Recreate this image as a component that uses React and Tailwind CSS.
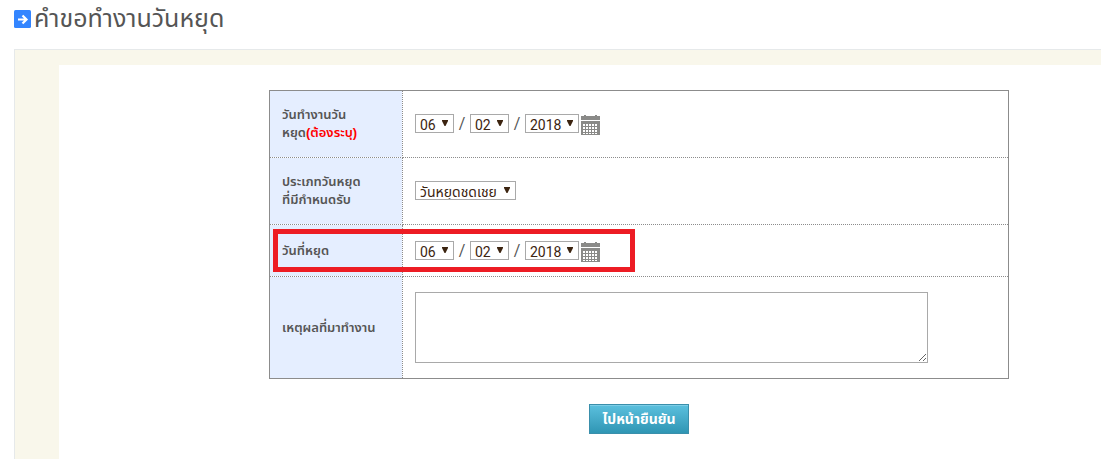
import { useState } from 'react';

const months = ['01', '02', '03', '04', '05', '06', '07', '08', '09', '10', '11', '12'];
const days = Array.from({ length: 31 }, (_, i) => String(i + 1).padStart(2, '0'));
const years = ['2017', '2018', '2019'];

function Select({ label, value, onChange, options, className }) {
  return (
    <span className="relative inline-flex">
      <select
        aria-label={label}
        value={value}
        onChange={(e) => onChange(e.target.value)}
        className={`h-[19px] appearance-none border border-[#a9a9a9] bg-white pl-1 text-[#3c2410] ${className}`}
      >
        {options.map((option) => (
          <option key={option} value={option}>{option}</option>
        ))}
      </select>
      <svg
        className="pointer-events-none absolute top-[6px] right-[6px] h-[6px] w-[6px]"
        viewBox="0 0 6 6"
        fill="#3c2410"
        aria-hidden="true"
      >
        <path d="M0 0h6v1L3.5 6h-1L0 1z" />
      </svg>
    </span>
  );
}

function CalendarIcon() {
  return (
    <svg className="h-5 w-[19px]" viewBox="0 0 19 20" fill="#8a8a88" aria-hidden="true">
      <path d="M0 1h3V0h2v1h9V0h2v1h3v4H0z" />
      <path d="M0 6h19v14H0z" />
      <g fill="#fff">
        {[9, 12, 15].map((y) =>
          [2, 5, 8, 11, 14].map((x) => (
            <rect key={`${x}-${y}`} x={x} y={y} width="2" height="2" />
          ))
        )}
        <path d="M2 18h2v1H2zM5 18h2v1H5zM8 18h2v1H8zM11 18h2v1h-2zM14 18h2v1h-2z" />
      </g>
    </svg>
  );
}

function DateFields({ name }) {
  const [day, setDay] = useState('06');
  const [month, setMonth] = useState('02');
  const [year, setYear] = useState('2018');

  return (
    <div className="flex h-5 items-start font-[Roboto,sans-serif] text-sm">
      <Select label={`${name} วัน`} value={day} onChange={setDay} options={days} className="w-[39px] pb-[2px]" />
      <span className="w-4 text-center text-base leading-5">/</span>
      <Select label={`${name} เดือน`} value={month} onChange={setMonth} options={months} className="w-[39px] pb-[2px]" />
      <span className="w-4 text-center text-base leading-5">/</span>
      <Select label={`${name} ปี`} value={year} onChange={setYear} options={years} className="w-[54px] pb-[2px]" />
      <button type="button" aria-label={`${name} ปฏิทิน`} className="mt-px ml-[2px]">
        <CalendarIcon />
      </button>
    </div>
  );
}

function Row({ label, htmlFor, height, highlighted, children }) {
  return (
    <tr className={height}>
      <th
        scope="row"
        className="relative w-[133px] border border-dotted border-[#8c8c8c] bg-[#e5eeff] px-3 text-left align-middle text-[13px] leading-[18px] font-semibold whitespace-nowrap"
      >
        {htmlFor ? <label htmlFor={htmlFor}>{label}</label> : label}
        {highlighted && (
          <span className="pointer-events-none absolute top-1 left-[3px] z-10 h-[43px] w-[362px] border-[5px] border-[#ed1c24]" />
        )}
      </th>
      <td className="border border-dotted border-[#8c8c8c] px-3 align-middle">{children}</td>
    </tr>
  );
}

export default function App() {
  const [holidayType, setHolidayType] = useState('วันหยุดชดเชย');
  const [reason, setReason] = useState('');

  return (
    <div className="flex h-screen flex-col overflow-hidden bg-white pl-[14px] font-['Liberation_Sans','Noto_Sans_Thai','Noto_Sans',sans-serif] text-[#555]">
      <h1 className="flex h-[49px] shrink-0 items-start gap-[3px] pt-1 text-[25px] leading-7">
        <svg className="mt-[6px] h-[18px] w-[17px]" viewBox="0 0 17 18" aria-hidden="true">
          <rect width="17" height="18" rx="1.5" fill="#3385ff" />
          <path d="M4 9.5h8M8.5 5.5l4 4-4 4" fill="none" stroke="#fff" strokeWidth="2.2" />
        </svg>
        คำขอทำงานวันหยุด
      </h1>

      <main className="grow border-t border-l border-[#e6e9ea] bg-[#f9f7eb] pt-[15px] pl-11">
        <form onSubmit={(e) => e.preventDefault()} className="h-full bg-white pt-[25px] pl-[210px]">
          <div className="w-full max-w-[740px]">
            <table className="w-full table-fixed border-collapse border border-solid border-[#8c8c8c]">
              <tbody>
                <Row
                  height="h-[67px]"
                  label={
                    <>
                      วันทำงานวัน
                      <br />
                      หยุด<span className="text-[#f00]">(ต้องระบุ)</span>
                    </>
                  }
                >
                  <DateFields name="วันทำงานวันหยุด" />
                </Row>
                <Row
                  height="h-[67px]"
                  label={
                    <>
                      ประเภทวันหยุด
                      <br />
                      ที่มีกำหนดรับ
                    </>
                  }
                >
                  <div className="flex h-5 items-start text-sm">
                    <Select
                      label="ประเภทวันหยุดที่มีกำหนดรับ"
                      value={holidayType}
                      onChange={setHolidayType}
                      options={['วันหยุดชดเชย']}
                      className="w-[101px]"
                    />
                  </div>
                </Row>
                <Row height="h-[52px]" label="วันที่หยุด" highlighted>
                  <DateFields name="วันที่หยุด" />
                </Row>
                <Row height="h-[102px]" label="เหตุผลที่มาทำงาน" htmlFor="reason">
                  <textarea
                    id="reason"
                    value={reason}
                    onChange={(e) => setReason(e.target.value)}
                    className="block h-[71px] w-full max-w-[513px] border border-[#a9a9a9] bg-white p-1 text-sm"
                  />
                </Row>
              </tbody>
            </table>
            <div className="flex justify-center pt-[25px]">
              <button
                type="submit"
                className="h-[30px] w-[100px] border border-[#3a8fab] bg-linear-to-b from-[#5bc0de] to-[#2f96b4] text-sm leading-7 font-bold text-white inset-shadow-[0_1px_0_#7dcde6]"
              >
                ไปหน้ายืนยัน
              </button>
            </div>
          </div>
        </form>
      </main>
    </div>
  );
}
